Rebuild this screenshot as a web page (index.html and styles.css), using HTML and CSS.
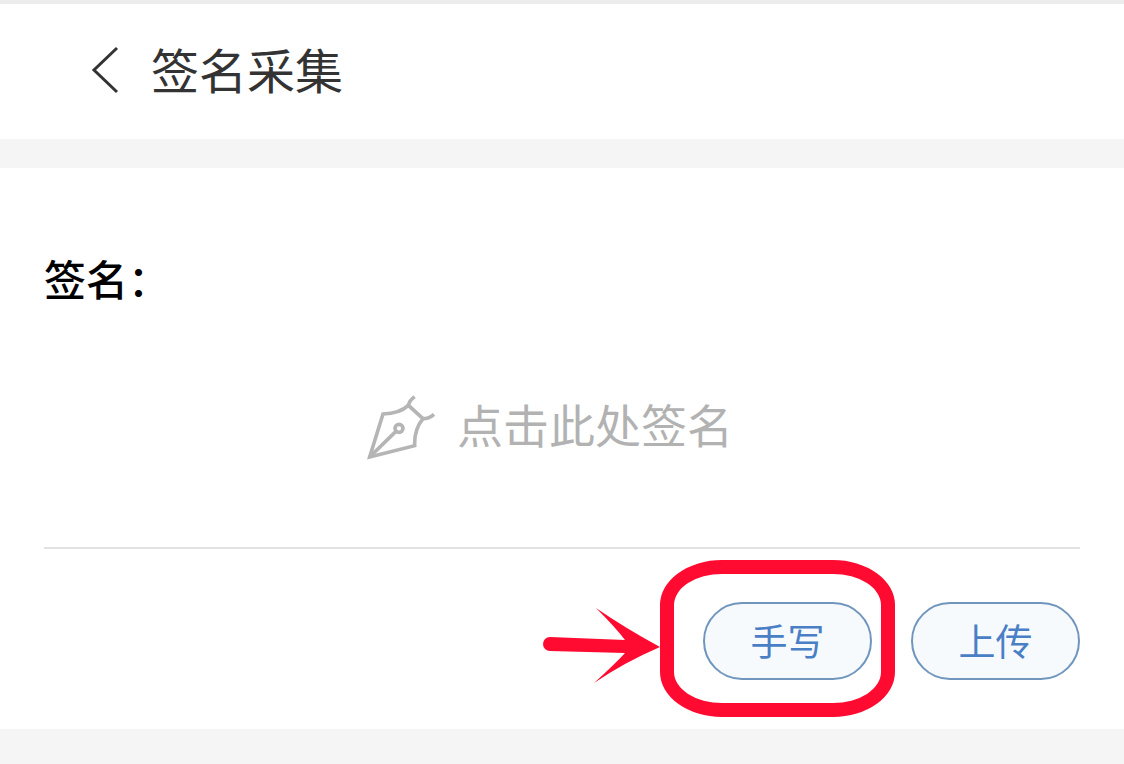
FILE: index.html
```html
<!DOCTYPE html>
<html lang="zh-CN">
<head>
    <meta charset="UTF-8">
    <meta name="viewport" content="width=device-width, initial-scale=1.0">
    <title>签名采集</title>
    <link rel="stylesheet" href="styles.css">
</head>
<body>
    <header class="header">
        <button type="button" class="back" aria-label="返回">
            <svg width="28" height="48" viewBox="0 0 28 48" fill="none" stroke="#333" stroke-width="3">
                <path d="M26 2 L3 24 L26 46"/>
            </svg>
        </button>
        <h1>签名采集</h1>
    </header>

    <main class="card">
        <h2 class="label" id="signLabel">签名：</h2>

        <button type="button" class="sign-area" aria-describedby="signLabel">
            <svg class="pen" width="68" height="66" viewBox="36 26 204 198" fill="none" stroke="#b5b5b5" stroke-width="11">
                <path d="M44 215 L84 86 Q135 84 160 60 L204 100 Q177 132 179 181 Z"/>
                <path d="M44 215 L122 139"/>
                <circle cx="132" cy="129" r="12"/>
                <path d="M160 60 Q164 44 179 34 M204 100 Q222 100 237 87"/>
            </svg>
            <span class="hint">点击此处签名</span>
        </button>

        <div class="actions">
            <div class="marked">
                <button type="button" class="btn">手写</button>
                <span class="ring"></span>
                <svg class="arrow" width="118" height="76" viewBox="0 0 118 76" fill="#ff0a30">
                    <path d="M7 29 L82 32 Q73 20 53 0 Q82 20 117 39 Q82 54 51 75 Q72 56 82 45 L7 43 A7 7 0 0 1 7 29 Z"/>
                </svg>
            </div>
            <button type="button" class="btn">上传</button>
        </div>
    </main>
</body>
</html>
```
FILE: styles.css
```css
* {
    box-sizing: border-box;
}
body {
    font-family: "Noto Sans CJK SC", sans-serif;
    background-color: #f5f5f5;
    margin: 0;
}
button {
    font-family: inherit;
    padding: 0;
    cursor: pointer;
}
.header {
    display: flex;
    align-items: center;
    gap: 32px;
    height: 139px;
    padding: 0 91px 4px;
    background: #fff;
    border-top: 4px solid #ececec;
}
.back {
    display: flex;
    background: none;
    border: none;
}
h1 {
    margin: 0;
    padding-bottom: 4px;
    font-size: 48px;
    font-weight: 400;
    line-height: 72px;
    color: #333;
}
.card {
    margin-top: 29px;
    padding: 78px 44px 49px;
    background: #fff;
}
.label {
    margin: 0 0 2px;
    font-size: 42px;
    font-weight: 500;
    line-height: 64px;
    color: #000;
}
.sign-area {
    display: flex;
    align-items: center;
    justify-content: center;
    gap: 22px;
    width: 100%;
    height: 237px;
    padding: 0 24px 6px 0;
    background: none;
    border: none;
    border-bottom: 2px solid #e2e2e2;
    color: #b2b2b2;
    font-size: 46px;
}
.hint {
    padding-bottom: 8px;
}
.actions {
    display: flex;
    justify-content: flex-end;
    gap: 39px;
    margin-top: 53px;
}
.marked {
    position: relative;
}
.btn {
    display: block;
    width: 169px;
    height: 78px;
    padding-bottom: 3px;
    border: 2px solid #7096be;
    border-radius: 39px;
    background: #f6fafd;
    color: #4a7fc6;
    font-size: 37px;
    font-weight: 400;
}
/* highlight around the handwriting button */
.ring {
    position: absolute;
    top: -42px;
    left: -43px;
    width: 235px;
    height: 157px;
    border: 14px solid #ff0a30;
    border-radius: 62px / 45px;
    pointer-events: none;
}
.arrow {
    position: absolute;
    top: 6px;
    left: -160px;
}
```
